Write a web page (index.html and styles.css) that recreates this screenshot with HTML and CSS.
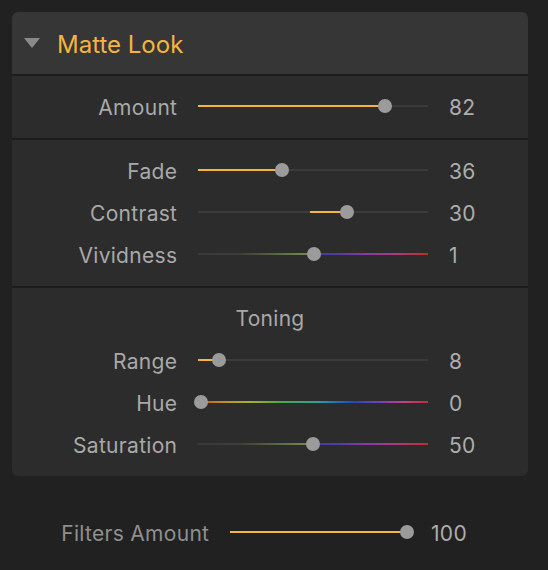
FILE: index.html
```html
<!DOCTYPE html>
<html>
<head>
<meta charset="utf-8">
<link rel="stylesheet" href="styles.css">
</head>
<body>
<div class="panel">
  <div class="header">
    <svg class="caret" width="16" height="10" viewBox="0 0 16 10"><polygon points="0,0 16,0 8,10" fill="#8a8a8a"/></svg>
    <span class="title">Matte Look</span>
  </div>
  <div class="section">
    <div class="row">
      <span class="label">Amount</span>
      <div class="track"><div class="line"></div><div class="fill" style="--a:0;--v:0.82"></div><div class="thumb" style="--v:0.82"></div></div>
      <span class="value">82</span>
    </div>
  </div>
  <div class="section">
    <div class="row">
      <span class="label">Fade</span>
      <div class="track"><div class="line"></div><div class="fill" style="--a:0;--v:0.36"></div><div class="thumb" style="--v:0.36"></div></div>
      <span class="value">36</span>
    </div>
    <div class="row">
      <span class="label">Contrast</span>
      <div class="track"><div class="line"></div><div class="fill" style="--a:0.487;--v:0.65"></div><div class="thumb" style="--v:0.65"></div></div>
      <span class="value">30</span>
    </div>
    <div class="row">
      <span class="label">Vividness</span>
      <div class="track"><div class="line vivid"></div><div class="thumb" style="--v:0.505"></div></div>
      <span class="value">1</span>
    </div>
  </div>
  <div class="section">
    <div class="subtitle">Toning</div>
    <div class="row">
      <span class="label">Range</span>
      <div class="track"><div class="line"></div><div class="fill" style="--a:0;--v:0.08"></div><div class="thumb" style="--v:0.08"></div></div>
      <span class="value">8</span>
    </div>
    <div class="row">
      <span class="label">Hue</span>
      <div class="track"><div class="line hue"></div><div class="thumb" style="--v:0"></div></div>
      <span class="value">0</span>
    </div>
    <div class="row">
      <span class="label">Saturation</span>
      <div class="track"><div class="line vivid"></div><div class="thumb" style="--v:0.5"></div></div>
      <span class="value">50</span>
    </div>
  </div>
</div>
<div class="row filters">
  <span class="label">Filters Amount</span>
  <div class="track"><div class="line"></div><div class="fill" style="--a:0;--v:1"></div><div class="thumb" style="--v:1"></div></div>
  <span class="value">100</span>
</div>
</body>
</html>
```

FILE: styles.css
```css
html, body {
  margin: 0;
  padding: 0;
  background: #212121;
  font-family: Inter, "Noto Sans", sans-serif;
  color: #a9a9a9;
}
body {
  width: 548px;
  height: 570px;
  overflow: hidden;
  padding-top: 12px;
  box-sizing: border-box;
}
.panel {
  margin-left: 12px;
  width: 516px;
  background: #1c1c1c;
  border-radius: 6px;
  overflow: hidden;
  display: flex;
  flex-direction: column;
  gap: 2px;
}
.header {
  height: 62px;
  background: #363636;
  display: flex;
  align-items: center;
}
.caret {
  margin-left: 12px;
  margin-right: 17px;
}
.title {
  font-size: 24px;
  color: #f5b43f;
  line-height: 1;
  padding-top: 4px;
}
.section {
  background: #2c2c2c;
  padding: 9px 0 11px;
}
.row {
  height: 42px;
  display: grid;
  grid-template-columns: 165px 230px 1fr;
  column-gap: 21px;
  align-items: center;
  font-size: 21px;
  letter-spacing: 0.3px;
}
.label, .value {
  padding-top: 3px;
}
.label {
  text-align: right;
  color: #a9a9a9;
  margin-right: -0.3px;
}
.value {
  color: #adadad;
}
.subtitle {
  height: 42px;
  line-height: 44px;
  text-align: center;
  font-size: 21px;
  letter-spacing: 0.3px;
  color: #a9a9a9;
}
.track {
  position: relative;
  height: 14px;
}
.line {
  position: absolute;
  left: 0;
  right: 0;
  top: 6px;
  height: 2px;
  background: #3b3b3b;
}
.line.vivid {
  background: linear-gradient(to right, #3a3a3a 0%, #3c3c3a 18%, #6f8a4c 47%, #7a9050 50%, #3d3da2 53%, #5a3aa6 62%, #8a3aa4 74%, #aa3a7c 86%, #c02c2c 100%);
}
.line.hue {
  background: linear-gradient(to right, #c84a28 0%, #c08a2c 10%, #a8b030 22%, #50a848 36%, #2aa0a0 52%, #2048c4 68%, #8040b4 80%, #c04088 90%, #c03030 100%);
}
.fill {
  position: absolute;
  top: 6px;
  height: 2px;
  background: #f5b43f;
  left: calc(3px + var(--a) * (100% - 6px));
  width: calc((var(--v) - var(--a)) * (100% - 6px));
}
.fill[style*="--a:0;"] {
  left: 0;
  width: calc(3px + var(--v) * (100% - 6px));
}
.thumb {
  position: absolute;
  top: 0;
  width: 14px;
  height: 14px;
  border-radius: 50%;
  background: #9b9b9b;
  left: calc(3px + var(--v) * (100% - 6px) - 7px);
}
.filters {
  margin-top: 35px;
  grid-template-columns: 209px 180px 1fr;
}
.filters .label {
  color: #8f8f8f;
}
```
